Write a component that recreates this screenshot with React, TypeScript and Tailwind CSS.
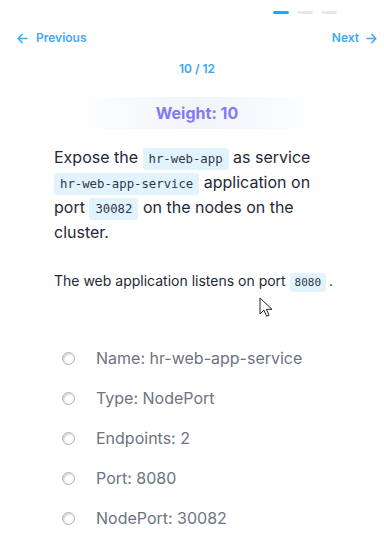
import React from 'react';

const options = [
    'Name: hr-web-app-service',
    'Type: NodePort',
    'Endpoints: 2',
    'Port: 8080',
    'NodePort: 30082',
];

function Code({ children, small }: { children: React.ReactNode; small?: boolean }) {
    return (
        <code
            className={
                small
                    ? "px-[5px] py-[3px] leading-none rounded-[3px] bg-[#e3f3fd] text-[11px] text-[#2d3748]"
                    : "px-[6px] py-[4px] leading-none rounded-[3px] bg-[#e3f3fd] text-[12.3px] text-[#2d3748]"
            }
            style={{ fontFamily: '"DejaVu Sans Mono", "Liberation Mono", monospace' }}
        >
            {children}
        </code>
    );
}

function ArrowLeft() {
    return (
        <svg width="11" height="11" viewBox="0 0 11 11" fill="none" stroke="currentColor" strokeWidth="1.6" strokeLinecap="round" strokeLinejoin="round">
            <path d="M10 5.5H1.2M5.2 1.3L1.2 5.5l4 4.2" />
        </svg>
    );
}

function ArrowRight() {
    return (
        <svg width="11" height="11" viewBox="0 0 11 11" fill="none" stroke="currentColor" strokeWidth="1.6" strokeLinecap="round" strokeLinejoin="round">
            <path d="M1 5.5h8.8M5.8 1.3l4 4.2-4 4.2" />
        </svg>
    );
}

function Radio() {
    return (
        <span className="w-[13px] h-[13px] rounded-full border border-[#b4b4b4] bg-white shadow-[inset_1px_1px_2px_rgba(0,0,0,0.22)] shrink-0" />
    );
}

function Cursor() {
    return (
        <svg className="absolute left-[259px] top-[297px]" width="13" height="21" viewBox="0 0 13 21">
            <path d="M1 1v16l4-3.8 2.6 6 2.4-1-2.6-5.9H13z" fill="#fff" stroke="#222" strokeWidth="1" strokeLinejoin="round" />
        </svg>
    );
}

export default function App() {
    return (
        <div className="relative w-[384px] h-[539px] bg-white overflow-hidden" style={{ fontFamily: 'Inter, "Noto Sans", sans-serif' }}>
            <div className="flex justify-end gap-2 pr-[47px] pt-[11px]">
                <span className="w-4 h-[3px] rounded-full bg-[#1ea7fd]" />
                <span className="w-4 h-[3px] rounded-full bg-[#e8e8e8]" />
                <span className="w-4 h-[3px] rounded-full bg-[#e8e8e8]" />
            </div>

            <div className="pl-[17px] pr-[7px]">
                <div className="mt-[16px] flex justify-between text-[12px] leading-4 font-semibold text-[#44a9f2]">
                    <div className="flex items-center gap-[8px]"><ArrowLeft /> Previous</div>
                    <div className="flex items-center gap-[7px]">Next <ArrowRight /></div>
                </div>

                <div className="mt-[15px] text-center text-[12px] leading-4 font-semibold text-[#3aa5f0]">10 / 12</div>

                <div className="mt-[20px] mx-auto w-[256px] h-[32px] flex items-center justify-center bg-linear-to-r from-white via-[#f1f4f9] to-white text-[16px] font-bold text-[#8479f4]">
                    Weight: 10
                </div>
            </div>

            <p className="mt-[16px] ml-[54px] w-[275px] text-[16px] leading-[25px] text-[#1f2937]">
                Expose the <Code>hr-web-app</Code> as service <Code>hr-web-app-service</Code> application on port <Code>30082</Code> on the nodes on the cluster.
            </p>

            <p className="mt-[26px] ml-[54px] text-[14px] leading-5 text-[#1f2937]">
                The web application listens on port <Code small>8080</Code><span className="ml-[3px]">.</span>
            </p>

            <div className="mt-[47px] flex flex-col">
                {options.map((o) => (
                    <label key={o} className="h-[40px] pl-[62px] flex items-center gap-[21px] text-[16px] text-[#6e7480]">
                        <Radio />
                        <span>{o}</span>
                    </label>
                ))}
            </div>

            <Cursor />
        </div>
    );
}
